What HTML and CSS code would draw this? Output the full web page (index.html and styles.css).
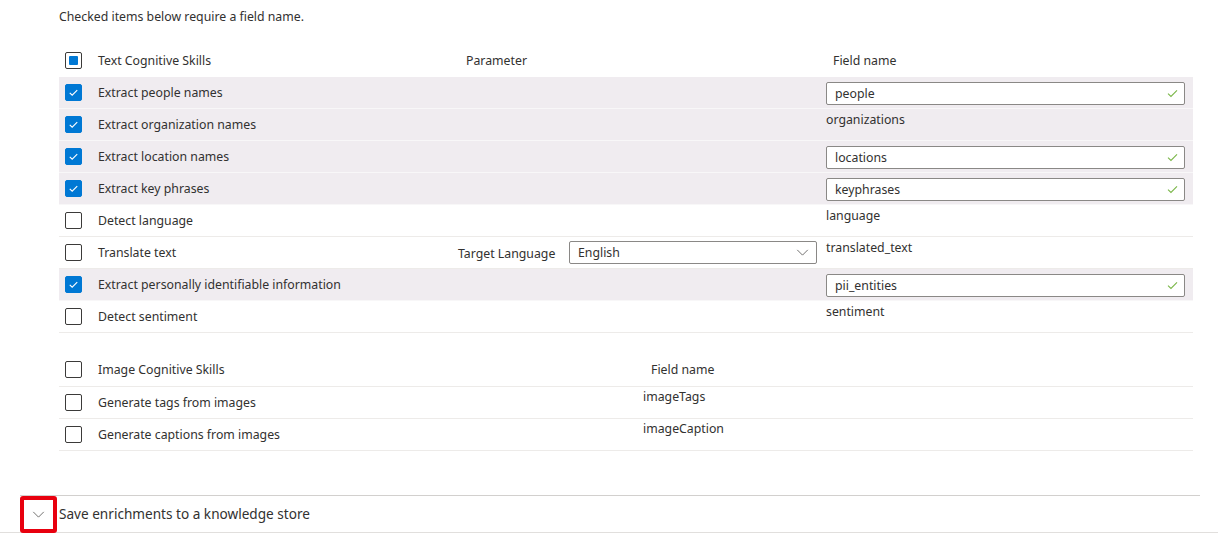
FILE: index.html
```html
<!DOCTYPE html>
<html lang="en">
<head>
<meta charset="utf-8">
<title>Cognitive skills</title>
<link rel="stylesheet" href="styles.css">
</head>
<body>
<div class="page">
  <p class="intro">Checked items below require a field name.</p>

  <div class="table text-table">
    <div class="row head">
      <div class="cb-cell"><span class="cb indet"><span class="dot"></span></span></div>
      <div class="name">Text Cognitive Skills</div>
      <div class="param param-head">Parameter</div>
      <div class="field field-head">Field name</div>
    </div>

    <div class="row shaded">
      <div class="cb-cell"><span class="cb checked"><svg viewBox="0 0 16 16"><path d="M4 8.3l2.6 2.6L12 5.5"/></svg></span></div>
      <div class="name">Extract people names</div>
      <div class="param"></div>
      <div class="field"><div class="input"><span>people</span><svg class="ok" viewBox="0 0 12 10"><path d="M1 5.2l3.3 3.1L11 1.5"/></svg></div></div>
    </div>

    <div class="row shaded">
      <div class="cb-cell"><span class="cb checked"><svg viewBox="0 0 16 16"><path d="M4 8.3l2.6 2.6L12 5.5"/></svg></span></div>
      <div class="name">Extract organization names</div>
      <div class="param"></div>
      <div class="field"><div class="value">organizations</div></div>
    </div>

    <div class="row shaded">
      <div class="cb-cell"><span class="cb checked"><svg viewBox="0 0 16 16"><path d="M4 8.3l2.6 2.6L12 5.5"/></svg></span></div>
      <div class="name">Extract location names</div>
      <div class="param"></div>
      <div class="field"><div class="input"><span>locations</span><svg class="ok" viewBox="0 0 12 10"><path d="M1 5.2l3.3 3.1L11 1.5"/></svg></div></div>
    </div>

    <div class="row shaded">
      <div class="cb-cell"><span class="cb checked"><svg viewBox="0 0 16 16"><path d="M4 8.3l2.6 2.6L12 5.5"/></svg></span></div>
      <div class="name">Extract key phrases</div>
      <div class="param"></div>
      <div class="field"><div class="input"><span>keyphrases</span><svg class="ok" viewBox="0 0 12 10"><path d="M1 5.2l3.3 3.1L11 1.5"/></svg></div></div>
    </div>

    <div class="row">
      <div class="cb-cell"><span class="cb"></span></div>
      <div class="name">Detect language</div>
      <div class="param"></div>
      <div class="field"><div class="value">language</div></div>
    </div>

    <div class="row">
      <div class="cb-cell"><span class="cb"></span></div>
      <div class="name">Translate text</div>
      <div class="param param-lang">
        <span class="plabel">Target Language</span>
        <div class="select"><span>English</span><svg class="chev" viewBox="0 0 14 8"><path d="M1 1l6 6 6-6"/></svg></div>
      </div>
      <div class="field"><div class="value">translated_text</div></div>
    </div>

    <div class="row shaded">
      <div class="cb-cell"><span class="cb checked"><svg viewBox="0 0 16 16"><path d="M4 8.3l2.6 2.6L12 5.5"/></svg></span></div>
      <div class="name">Extract personally identifiable information</div>
      <div class="param"></div>
      <div class="field"><div class="input"><span>pii_entities</span><svg class="ok" viewBox="0 0 12 10"><path d="M1 5.2l3.3 3.1L11 1.5"/></svg></div></div>
    </div>

    <div class="row">
      <div class="cb-cell"><span class="cb"></span></div>
      <div class="name">Detect sentiment</div>
      <div class="param"></div>
      <div class="field"><div class="value">sentiment</div></div>
    </div>
  </div>

  <div class="table image-table">
    <div class="row head">
      <div class="cb-cell"><span class="cb"></span></div>
      <div class="name">Image Cognitive Skills</div>
      <div class="field field-head">Field name</div>
    </div>
    <div class="row">
      <div class="cb-cell"><span class="cb"></span></div>
      <div class="name">Generate tags from images</div>
      <div class="field"><div class="value">imageTags</div></div>
    </div>
    <div class="row">
      <div class="cb-cell"><span class="cb"></span></div>
      <div class="name">Generate captions from images</div>
      <div class="field"><div class="value">imageCaption</div></div>
    </div>
  </div>
</div>

<div class="expander">
  <button class="exp-btn" type="button" aria-label="Expand"><svg viewBox="0 0 14 8"><path d="M1 1l6 6 6-6"/></svg></button>
  <span class="exp-title">Save enrichments to a knowledge store</span>
</div>
</body>
</html>
```

FILE: styles.css
```css
* { box-sizing: border-box; }
html, body { margin: 0; padding: 0; background: #fff; }
body {
  font-family: "Noto Sans", "Open Sans", sans-serif;
  font-size: 12.3px;
  color: #323130;
  width: 1218px;
  height: 537px;
  overflow: hidden;
}
.page { padding: 9px 0 0 59px; }
.intro { margin: 0; line-height: 16px; height: 16px; }

.table { width: 1134px; }
.text-table { margin-top: 19px; }
.image-table { margin-top: 20px; }

.row {
  display: grid;
  height: 32px;
  border-bottom: 1px solid #edebe9;
  align-items: center;
}
.text-table .row { grid-template-columns: 39px 352px 376px 367px; }
.image-table .row { grid-template-columns: 39px 545px 550px; }

.text-table .row.head { height: 33px; border-bottom: none; }
.image-table .row.head { height: 34px; }

.row.shaded { background: #f0ecf0; border-bottom-color: #f8f7f8; }

.name { line-height: 16px; padding-top: 1px; }

.cb-cell { padding-left: 6px; display: flex; align-items: center; }
.cb {
  width: 17px; height: 17px;
  border: 1px solid #3b3a39;
  border-radius: 2px;
  display: flex; align-items: center; justify-content: center;
  background: #fff;
}
.cb.checked { background: #0078d4; border-color: #0078d4; }
.cb.checked svg { width: 15px; height: 15px; }
.cb.checked path { fill: none; stroke: #fff; stroke-width: 1.2; }
.cb.indet .dot { width: 9px; height: 9px; background: #0078d4; border-radius: 1px; }

.param { height: 100%; }
.param-head { padding-left: 16px; display: flex; align-items: center; }
.param-lang { display: flex; align-items: center; padding-left: 8px; }
.plabel { width: 111px; padding-top: 1px; }
.select {
  width: 248px; height: 23px;
  border: 1px solid #8a8886;
  border-radius: 2px;
  display: flex; align-items: center; justify-content: space-between;
  padding: 0 7px 0 8px;
  background: #fff;
}
.chev { width: 13px; height: 7px; }
.chev path, .exp-btn path { fill: none; stroke: #605e5c; stroke-width: 1; }

.field { height: 100%; padding-right: 8px; }
.field-head { padding-left: 7px; display: flex; align-items: center; }
.image-table .field-head { padding-left: 8px; }
.value { padding-top: 3px; line-height: 16px; }
.image-table .value { padding-top: 2px; }
.input {
  margin-top: 5px;
  height: 23px;
  border: 1px solid #8a8886;
  border-radius: 2px;
  background: #fff;
  display: flex; align-items: center; justify-content: space-between;
  padding: 0 6px 0 8px;
}
.ok { width: 11px; height: 9px; }
.ok path { fill: none; stroke: #7ab648; stroke-width: 1.2; }

.expander {
  position: relative;
  margin-top: 44px;
  display: flex; align-items: center;
  height: 38px;
  border-bottom: 1px solid #e1dfdd;
}
.expander::before {
  content: "";
  position: absolute; left: 20px; right: 18px; top: 0;
  border-top: 1px solid #d2d0ce;
}
.exp-btn {
  margin-left: 20px;
  width: 37px; height: 37px;
  border: 4px solid #e8000e;
  border-radius: 3px;
  background: #fff;
  display: flex; align-items: center; justify-content: center;
  padding: 0;
  margin-top: 1px;
}
.exp-btn svg { width: 13px; height: 7px; }
.exp-title { margin-left: 2px; font-size: 13.6px; line-height: 18px; }
```
